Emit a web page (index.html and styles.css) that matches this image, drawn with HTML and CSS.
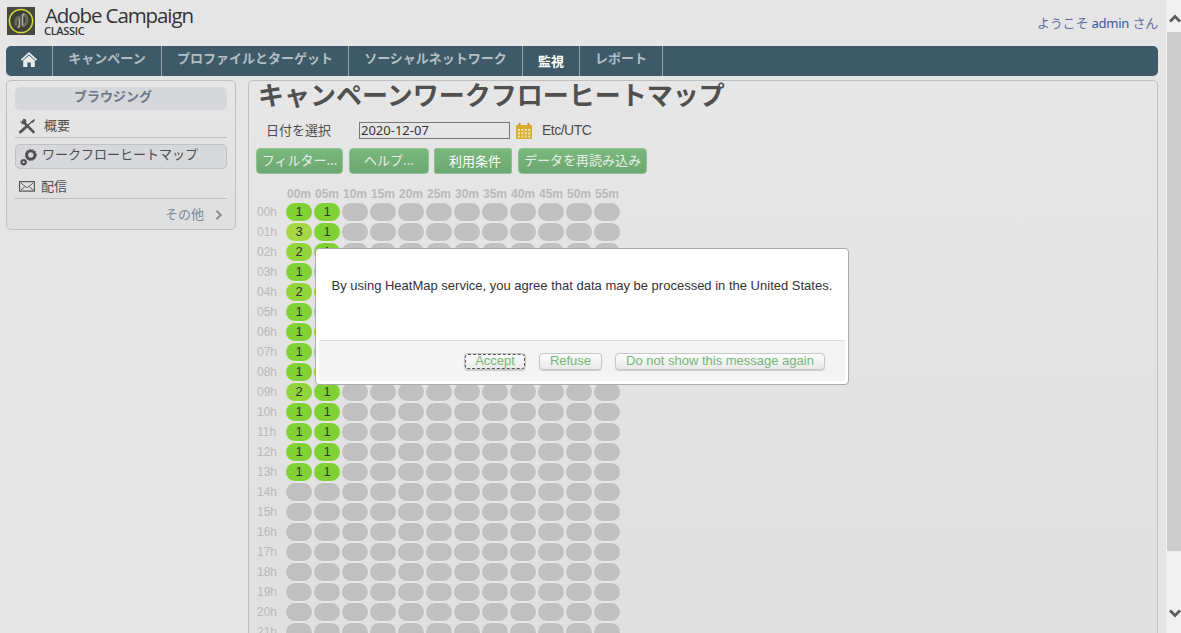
FILE: index.html
```html
<!DOCTYPE html>
<html lang="ja">
<head>
<meta charset="utf-8">
<title>Adobe Campaign Classic</title>
<link rel="stylesheet" href="styles.css">
</head>
<body>
<div class="page">
  <header class="header">
    <svg class="logo" viewBox="0 0 28 28"><rect width="28" height="28" fill="#46493c"/><circle cx="14" cy="14" r="11.6" fill="#3d4034" stroke="#d3df38" stroke-width="1.5"/><path d="M9 18.500V15q0-5 4.500-5" fill="none" stroke="#686b5e" stroke-width="3"/><path d="M16 7.500q4 .5 4 5.500t-5 6" fill="none" stroke="#686b5e" stroke-width="3"/><path d="M15.500 18.500V9q0-2 2-2M12.500 11.500V18q0 2.500-2 2.500" fill="none" stroke="#b0b3a4" stroke-width="1.600"/></svg>
    <div class="brand"><div class="brand-name">Adobe Campaign</div><div class="brand-sub">CLASSIC</div></div>
    <div class="welcome">ようこそ <span class="user">admin</span> さん</div>
  </header>
  <nav class="nav">
    <a class="home"><svg width="16" height="16" viewBox="0 0 16 16"><path d="M0.500 8 8 1.200 15.500 8" fill="none" stroke="#e8ebec" stroke-width="1.700"/><path d="M2.200 8.600 8 3.500l5.800 5.100V15H9.800v-4.500H6.400V15H2.200z" fill="#e8ebec"/></svg></a>
    <a class="n1">キャンペーン</a><a class="n2">プロファイルとターゲット</a><a class="n3">ソーシャルネットワーク</a><a class="n4 active">監視</a><a class="n5">レポート</a>
  </nav>
  <div class="columns">
    <aside class="sidebar">
      <div class="side-title">ブラウジング</div>
      <div class="side-item overview"><svg width="17" height="16" viewBox="0 0 17 16"><path d="M4 3.500 14.500 14" stroke="#555" stroke-width="2.600" stroke-linecap="round"/><path d="M1 2.500 3 4.500 5 3 3.500 1c3-1 4.500 1 3.500 4S2 6.500 1 2.500z" fill="#555"/><path d="M1.500 14 6.500 9.500" stroke="#555" stroke-width="3" stroke-linecap="round"/><path d="M6 10 13 3.500" stroke="#555" stroke-width="1.400"/><path d="M12 3.500 15 1l1 1-2 3z" fill="#555"/></svg><span>概要</span></div>
      <div class="side-item selected"><svg width="17" height="17" viewBox="0 0 17 17"><circle cx="10.800" cy="6" r="4" fill="none" stroke="#4d4d4d" stroke-width="2.700"/><circle cx="10.800" cy="6" r="5.300" fill="none" stroke="#4d4d4d" stroke-width="1.200" stroke-dasharray="1.700 1.100"/><circle cx="3.600" cy="13.200" r="2" fill="none" stroke="#4d4d4d" stroke-width="1.800"/><circle cx="3.600" cy="13.200" r="3" fill="none" stroke="#4d4d4d" stroke-dasharray="1.300 1.050"/></svg><span>ワークフローヒートマップ</span></div>
      <div class="side-item delivery"><svg width="16" height="11" viewBox="0 0 16 11"><rect x=".6" y=".6" width="14.800" height="9.500" fill="none" stroke="#555" stroke-width="1.200"/><path d="M2 2q5 4.500 6 4.500T14 2M2 9l3.500-3M14 9l-3.500-3" fill="none" stroke="#555"/></svg><span>配信</span></div>
      <div class="more"><span>その他</span><svg width="8" height="10" viewBox="0 0 8 10"><path d="m1.500.8 4.200 4.200-4.200 4.200" fill="none" stroke="#8e8e8e" stroke-width="2"/></svg></div>
    </aside>
    <main class="main">
      <h1>キャンペーンワークフローヒートマップ</h1>
      <div class="date-row"><span class="date-label">日付を選択</span><span class="date-box">2020-12-07</span><svg width="16" height="16" viewBox="0 0 16 16"><path d="M0 2h16v14H0z" fill="#d9af2f"/><path d="M3.500 0v3M12.500 0v3" stroke="#e58a35" stroke-width="2"/><path d="M2 6h2v2H2zM5.400 6h2v2h-2zM8.800 6h2v2h-2zM12.200 6h2v2h-2zM2 9.200h2v2H2zM5.400 9.200h2v2h-2zM8.800 9.200h2v2h-2zM12.200 9.200h2v2h-2zM2 12.400h2v2H2zM5.400 12.400h2v2h-2zM8.800 12.400h2v2h-2zM12.200 12.400h2v2h-2z" fill="#eee2b8"/></svg><span class="zone">Etc/UTC</span></div>
      <div class="actions"><a class="b1">フィルター...</a><a class="b2">ヘルプ...</a><a class="b3">利用条件</a><a class="b4">データを再読み込み</a></div>
      <div class="heatmap" id="heatmap"></div>
    </main>
  </div>
</div>
<div class="scrollbar"><svg width="12" height="9" viewBox="0 0 12 9"><path d="m1 7.500 5-5 5 5" fill="none" stroke="#5b5b5b" stroke-width="2.700"/></svg><div class="thumb"></div><svg width="12" height="9" viewBox="0 0 12 9"><path d="m1 1.500 5 5 5-5" fill="none" stroke="#5b5b5b" stroke-width="2.700"/></svg></div>
<div class="dialog">
  <div class="message"><span>By using HeatMap service, you agree that data may be processed in the United States.</span></div>
  <div class="dialog-footer"><button class="accept">Accept</button><button class="refuse">Refuse</button><button class="never">Do not show this message again</button></div>
</div>
<script src="app.js"></script>
</body>
</html>
```
FILE: styles.css
```css
* { box-sizing: border-box; }
body { margin: 0; width: 1181px; height: 633px; overflow: hidden; display: flex; position: relative; background: #e5e5e5; color: #4d4d4d; font: 13px/18px "Liberation Sans", "Noto Sans CJK JP", sans-serif; }
.page { width: 1166px; height: 633px; padding: 0 8px 0 6px; overflow: hidden; }
.header { height: 46px; display: flex; align-items: flex-start; }
.logo { width: 28px; height: 28px; margin: 7px 0 0 1px; }
.brand { margin: 5px 0 0 10px; color: #333; white-space: nowrap; }
.brand-name { font: 20.5px/21px "Open Sans", "Noto Sans", sans-serif; letter-spacing: -1.1px; }
.brand-sub { font: 600 11px/10px "Open Sans", "Noto Sans", sans-serif; letter-spacing: -.3px; margin-left: -1px; }
.welcome { margin: 14px 0 0 auto; color: #6270a6; font-family: "Noto Sans", "Noto Sans CJK JP", sans-serif; font-size: 13px; letter-spacing: -.2px; white-space: pre; }
.user { color: #3857a0; }
.nav { height: 30px; width: 1152px; border-radius: 5px; background: #3e5a68; display: flex; overflow: hidden; }
.nav a { height: 30px; flex: none; border-right: 1px solid #97a4ab; color: #b3bfc4; font: bold 13px/23px "Noto Sans CJK JP", sans-serif; text-align: center; white-space: nowrap; }
.nav .home { width: 47px; padding: 6px 0 0; line-height: 0; }
.nav .n1 { width: 109px; }
.nav .n2 { width: 187px; }
.nav .n3 { width: 174px; }
.nav .n4 { width: 57px; }
.nav .n5 { width: 83px; }
.nav .active { color: #fff; line-height: 29px; }
.columns { display: flex; gap: 12px; padding-top: 4px; align-items: flex-start; }
.sidebar { width: 230px; height: 150px; border: 1px solid #bfbfbf; border-radius: 5px; padding: 6px 8px; background: linear-gradient(#e6e6e6, #dfdfdf); font-family: "Noto Sans CJK JP", sans-serif; }
.side-title { height: 23px; border-radius: 5px; background: #d5d7db; color: #6e7784; font-weight: bold; line-height: 17px; padding-left: 59px; }
.side-item { display: flex; color: #4d4d4d; }
.overview { height: 28px; border-bottom: 1px solid #bfbfbf; padding: 7px 0 0 4px; gap: 8px; }
.overview span { line-height: 15px; }
.overview svg { margin-top: 1px; }
.selected { height: 25px; margin-top: 6px; border: 1px solid #bfc0c4; border-radius: 5px; background: #d6d8dc; padding: 3px 0 0 4px; gap: 6px; }
.selected span { line-height: 12px; margin-left: -1px; }
.selected svg { margin-top: 1px; }
.delivery { height: 30px; border-bottom: 1px solid #bfbfbf; padding: 9px 0 0 4px; gap: 6px; }
.delivery span { line-height: 16px; }
.delivery svg { margin-top: 3px; }
.more { display: flex; justify-content: flex-end; gap: 11px; padding: 6px 4px 0 0; color: #74899a; }
.more span { line-height: 17px; }
.more svg { margin-top: 5px; }
.main { width: 910px; height: 620px; border: 1px solid #bfbfbf; border-radius: 5px; background: linear-gradient(#e6e6e6, #e0e0e0 80%); padding-left: 7px; }
h1 { margin: 0 0 0 2px; height: 34px; font: bold 26px/26px "Noto Sans CJK JP", sans-serif; color: #505050; white-space: nowrap; }
.date-row { height: 33px; display: flex; padding: 6px 0 0 10px; align-items: flex-start; }
.date-label { width: 93px; font-family: "Noto Sans CJK JP", sans-serif; line-height: 18px; }
.date-box { width: 151px; height: 17px; margin-top: 1px; border: 1px solid #777; padding-left: 1px; color: #333; font: 13px/15px "Noto Sans", sans-serif; }
.date-row svg { margin: 2px 10px 0 6px; }
.zone { font-size: 14px; letter-spacing: -.5px; line-height: 19px; }
.actions { display: flex; height: 27px; }
.actions a { height: 26px; flex: none; border: 1px solid #8fc291; border-radius: 4px; background: linear-gradient(#79b97d, #6da670); color: #e8eee8; font: 13px/21px "Noto Sans CJK JP", sans-serif; text-align: center; white-space: nowrap; }
.actions .b1 { width: 87px; margin-right: 6px; }
.actions .b2 { width: 80px; margin-right: 5px; }
.actions .b3 { width: 78px; margin-right: 6px; padding-left: 4px; line-height: 23px; color: #fff; border-radius: 2px; }
.actions .b4 { width: 129px; }
.heatmap { display: grid; grid-template-columns: 28px repeat(12, 28px); grid-template-rows: 15px; grid-auto-rows: 20px; padding-top: 12px; margin-left: 1px; font-size: 12px; color: #b9b9b9; }
.minute { font-weight: bold; line-height: 15px; text-align: center; }
.hour { line-height: 20px; }
.cell { width: 28px; height: 20px; border: 1px solid #e7e7e7; border-radius: 10px; background: #c0c0c0; color: #333; font-size: 13px; line-height: 18px; text-align: center; }
.one { background: #80d234; }
.two { background: #92d53a; }
.three { background: #a7d742; }
.scrollbar { width: 15px; height: 633px; background: #f0f0f0; padding: 14px 0 15px 1px; display: flex; flex-direction: column; justify-content: space-between; overflow: hidden; }
.scrollbar svg { flex: none; margin-left: 2px; }
.thumb { width: 14px; height: 519px; background: #cdcdcd; margin: 9px 0 auto; flex: none; }
.dialog { position: absolute; left: 315px; top: 248px; width: 534px; height: 137px; background: #fff; border: 1px solid #aaa; border-radius: 4px; }
.message { height: 91px; padding: 28px 0 0 15.5px; color: #333; white-space: nowrap; }
.dialog-footer { height: 41px; margin: 0 3px; border-top: 1px solid #ddd; border-radius: 0 0 4px 4px; background: #f4f4f4; display: flex; justify-content: flex-end; gap: 13px; padding: 12px 20px 0 0; }
.dialog-footer button { height: 17px; padding: 0 0 3px; border: 1px solid #c6c6c6; border-radius: 4px; background: linear-gradient(#fdfdfd, #e9e9e9); box-shadow: 0 1px 1px #ccc; color: #74b676; font: 13px/13px "Liberation Sans", sans-serif; white-space: nowrap; }
.dialog-footer .accept { width: 62px; outline: 1px dashed #555; outline-offset: -2px; }
.dialog-footer .refuse { width: 63px; }
.dialog-footer .never { width: 210px; }
```
FILE: app.js
```js
const values = { 0: [1, 1], 1: [3, 1], 2: [2, 1], 4: [2, 1], 9: [2, 1] };
const levels = { 1: "one", 2: "two", 3: "three" };
const map = document.getElementById("heatmap");
function add(className, text) {
  const el = document.createElement("div");
  el.className = className;
  el.textContent = text;
  map.appendChild(el);
}
const pad = n => String(n).padStart(2, "0");
add("corner", "");
for (let m = 0; m < 60; m += 5) add("minute", pad(m) + "m");
for (let h = 0; h < 22; h++) {
  add("hour", pad(h) + "h");
  const row = h < 14 ? values[h] || [1, 1] : [];
  for (let c = 0; c < 12; c++) add("cell " + (levels[row[c]] || ""), row[c] || "");
}
```
